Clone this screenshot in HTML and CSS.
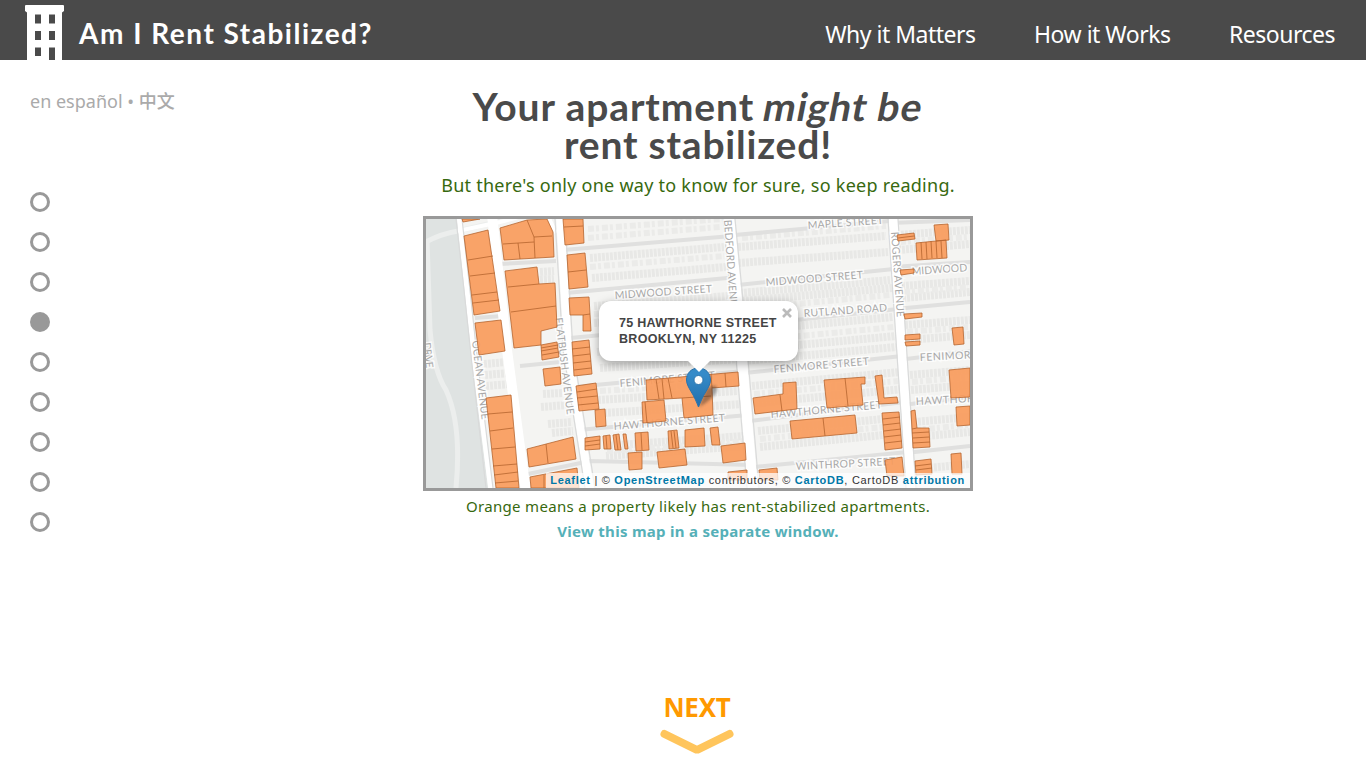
FILE: index.html
```html
<!DOCTYPE html>
<html lang="en">
<head>
<meta charset="utf-8">
<title>Am I Rent Stabilized?</title>
<link rel="stylesheet" href="styles.css">
</head>
<body>
<header class="header">
  <a class="brand">
    <svg class="logo" width="40" height="55" viewBox="0 0 40 55"><path fill="#fff" fill-rule="evenodd" d="M1 0H38Q39 0 39 1V6L37 7.500V55H30V42.500H24V55H2V7.500L0 6V1Q0 0 1 0ZM10 9.500V18.500H16V9.500ZM24 9.500V18.500H30V9.500ZM10 26V35H16V26ZM24 26V35H30V26ZM10 42.500V51H16V42.500Z"/></svg>
    <span class="brand-name">Am I Rent Stabilized?</span>
  </a>
  <nav class="nav"><a>Why it Matters</a><a>How it Works</a><a>Resources</a></nav>
</header>
<div class="page">
  <aside class="side">
    <div class="lang">en español • <span class="zh">中文</span></div>
    <div class="dots"><i></i><i></i><i></i><i class="on"></i><i></i><i></i><i></i><i></i><i></i></div>
  </aside>
  <main class="main">
    <h1 class="title"><span class="t1">Your apartment <em>might be</em></span><span class="t2">rent stabilized!</span></h1>
    <p class="sub">But there's only one way to know for sure, so keep reading.</p>
    <div class="map">
      <svg class="tiles" width="544" height="269" viewBox="426 219 544 269">
        <rect x="426" y="219" width="544" height="269" fill="#f4f4f2"/>
        <path d="M426 219H458L466 290L474 370L488 488H426Z" fill="#dfe3e2"/>
        <g class="parkroad"><path d="M424 243Q440 234 458 231L500 221"/><path d="M427 240L430 330Q434 372 446 390Q462 425 456 488"/></g>
        <g class="lots">
          <path d="M590 258L724 247M592 278L726 267M594 306L728 296M594 323L730 313M597 352L735 343M600 368L738 359M598 400L738 391M604 413L742 404M606 446L744 436M606 456L744 446"/>
          <path d="M738 247L886 236M738 263L888 252M740 293L890 280M742 301L892 288M742 331L893 317M744 350L896 336M744 361L896 347M752 386L900 372M755 403L904 389M758 431L904 417M760 447L904 433"/>
          <path d="M897 235L970 230M898 250L970 244M902 286L970 281M903 298L970 292M905 325L970 320M907 340L970 335M910 375L970 370M911 390L970 385M914 422L970 417M916 437L970 432M918 469L970 464"/>
          <path d="M540 272L554 271M540 280L554 279M484 364L507 362M485 375L509 373M486 386L510 384M543 394L562 393M541 407L567 405M548 424L572 422M552 433L573 431"/>
        </g>
        <g class="houses">
          <path d="M588 229L722 219M588 238L720 227M590 267L724 256M594 314L728 305M600 391L738 382M607 451L744 441M742 238L886 226M744 309L890 295M748 341L894 327M754 394L898 381M760 439L904 425M900 242L968 237M904 292L968 287M907 332L968 327M912 382L968 377M915 430L968 425"/>
        </g>
        <g class="street-case">
          <path d="M563 250L732 236M566 293L738 277M570 338L740 322M520 366L560 362M574 387L744 371M578 430L748 415M500 264L556 261M475 318L502 316M528 474L590 461L754 465"/>
          <path d="M735 235L890 221M738 285L894 269M740 326L898 309M745 373L902 356M750 421L904 402M754 467L908 452M892 267L970 262M895 309L970 302M898 360L970 351M902 405L970 397M906 453L970 446M890 223L970 220"/>
        </g>
        <g class="ave">
          <path d="M492 215L507 350L526 492" stroke-width="10"/>
          <path d="M458 231L500 222L545 210L556 233" stroke-width="4"/>
          <path d="M459 215L467 290L475 365L491 490" stroke-width="5"/>
          <path d="M560 215L568 350L590 490" stroke-width="8"/>
          <path d="M729 215L737 300L753 490" stroke-width="10"/>
          <path d="M893 215L901 340L911 490" stroke-width="9"/>
        </g>
        <path class="line" d="M456 219L464 290L472 365L486 488M462 219L470 290L478 365L493 488M565 219L573 350L595 488M555 219L563 350L585 488M735 219L743 300L759 488M723 219L731 300L747 488M898 219L906 340L916 488M888 219L896 340L906 488"/>
        <g class="labels">
          <text transform="translate(615 299) rotate(-4)" textLength="98">MIDWOOD STREET</text>
          <text transform="translate(766 286) rotate(-4.500)" textLength="98">MIDWOOD STREET</text>
          <text transform="translate(808 229) rotate(-4)" textLength="76">MAPLE STREET</text>
          <text transform="translate(804 317) rotate(-4)" textLength="84">RUTLAND ROAD</text>
          <text transform="translate(912 275) rotate(-4)" textLength="56">MIDWOOD</text>
          <text transform="translate(620 387) rotate(-5)" textLength="96">FENIMORE STREET</text>
          <text transform="translate(774 373) rotate(-5)" textLength="96">FENIMORE STREET</text>
          <text transform="translate(920 361) rotate(-3)">FENIMORE</text>
          <text transform="translate(614 430) rotate(-4.500)" textLength="112">HAWTHORNE STREET</text>
          <text transform="translate(771 418) rotate(-5)" textLength="112">HAWTHORNE STREET</text>
          <text transform="translate(916 405) rotate(-3)">HAWTHORNE</text>
          <text transform="translate(796 470) rotate(-3)" textLength="100">WINTHROP STREET</text>
          <text transform="translate(724 220) rotate(86)" textLength="94">BEDFORD AVENUE</text>
          <text transform="translate(891 232) rotate(86)" textLength="86">ROGERS AVENUE</text>
          <text transform="translate(555 318) rotate(83)" textLength="98">FLATBUSH AVENUE</text>
          <text transform="translate(472 341) rotate(83)" textLength="80">OCEAN AVENUE</text>
          <text transform="translate(423 343) rotate(83)" textLength="26">DRIVE</text>
        </g>
        <g class="lot">
          <path d="M462 219H480L463 222Z"/>
          <path d="M464 236L488 230L500 311L474 315ZM468 260L493 256M470 276L495 273M472 295L497 292M473 303L499 300M475 323L501 320L505 351L479 355Z"/>
          <path d="M500 228L527 220L547 219L553 232L554 257L504 260ZM527 220L534 237L535 258M534 237L552 236M503 244L534 242M518 243L520 259"/>
          <path d="M505 271L537 267L539 284L555 283L557 327L541 331L541 345L514 348ZM508 287L539 284M511 312L556 306"/>
          <path d="M563 219H583L584 243L565 245ZM564 227L583 226M567 255L585 253L588 287L569 289ZM568 272L586 270M569 298L589 297L591 331H583V315H570ZM583 315L590 314"/>
          <path d="M541 345L557 342L559 357L542 360ZM541 348L558 345M541 351L558 348M542 355L559 352M572 342L589 340L592 374L574 376ZM572 349L590 347M573 356L590 354M573 363L591 361M574 370L591 368"/>
          <path d="M543 369L560 367L561 384L545 386ZM576 386L596 383L599 409L579 411ZM577 392L597 389M577 398L597 396M578 405L598 403M595 410L605 409L606 426L596 427Z"/>
          <path d="M585 438L600 436V449L585 450ZM585 442L600 440M585 446L600 444M603 436L610 435L611 449H604ZM606 436L607 449M613 435L619 434L621 450H615ZM616 435L618 450M623 434H626L628 449H625Z"/>
          <path d="M486 398L511 395L519 488H496ZM488 414L512 412M490 431L513 428M492 449L515 447M493 466L517 464M494 475L518 472M495 483L518 481M527 449L573 437L576 459L529 467ZM546 444L548 463M530 477L577 468L579 488H531ZM544 475V488"/>
          <path d="M646 380L738 372L739 386L712 388L713 415L684 418L682 398L647 400ZM656 379L659 399M662 379L664 399M668 378L672 398M682 398L711 396M711 374L712 388M725 373L726 387M642 402L664 400L666 421L643 423ZM645 402L647 423"/>
          <path d="M635 433L648 432L649 450L636 451ZM641 433L642 450M668 431L677 430L679 448L669 449ZM671 431L673 448M674 431L676 448M685 430L704 428L705 446L685 447ZM710 428L718 427L720 445H712Z"/>
          <path d="M657 452L685 449L687 465L659 468ZM628 453L642 452V469L629 470ZM721 446L745 443L746 460L723 463ZM728 472L747 470V480H728ZM759 470L777 468L778 480H760Z"/>
          <path d="M753 398L783 394V383L796 382L797 409L755 414ZM780 395L782 411M824 380L865 377V384H861L863 405L827 408ZM845 378L848 406M875 376L882 375L884 398L897 397L898 403L879 404ZM790 421L855 415L857 433L792 439ZM823 418L825 436"/>
          <path d="M882 413L899 412L902 448L885 450ZM883 419L900 417M883 425L900 423M884 431L901 429M884 437L901 435M885 443L902 441M911 411L915 410L917 428H929L930 447L913 448ZM912 429L917 428M912 433L929 432M913 438L929 437M913 443L930 442"/>
          <path d="M915 461L931 459L932 474L916 475ZM915 466L931 464M916 470L932 468M885 460L902 457L904 476H887ZM951 454L961 453L962 474H952ZM949 370L970 368V397L951 398ZM956 407L970 406V425L957 426Z"/>
          <path d="M897 235L914 233L915 239L898 241ZM898 238L914 236M934 225L948 224L949 240L936 241ZM916 243L946 240L947 258L917 260ZM921 242L922 259M926 242L927 259M931 241L932 258M936 241L937 258M941 241L942 258M900 270L914 269V273L901 275ZM904 314L922 313V317L905 319ZM905 335L920 334V339L905 340ZM905 342L920 341V345L906 346ZM952 328L963 327L964 344L954 345Z"/>
        </g>
        <rect x="546" y="473" width="424" height="15" fill="#fff" opacity=".72"/>
      </svg>
      <div class="attribution"><b>Leaflet</b> | © <b>OpenStreetMap</b> contributors, © <b>CartoDB</b>, CartoDB <b>attribution</b></div>
      <svg class="pin" width="42" height="42" viewBox="0 0 42 42">
        <defs><linearGradient id="blue" x2="0" y2="1"><stop stop-color="#3a91cf"/><stop offset="1" stop-color="#216eaa"/></linearGradient><filter id="blur"><feGaussianBlur stdDeviation="1.5"/></filter></defs>
        <path d="M14 40L21 22Q32 15 32 23Q30 31 14 40Z" fill="#222" opacity=".4" filter="url(#blur)"/>
        <path d="M13.500 1C6 1 1.500 6.500 1.500 13C1.500 17 4 21 6 24.500C9 29 11.500 35 13.500 40C15.500 35 18 29 21 24.500C23 21 25.500 17 25.500 13C25.500 6.500 21 1 13.500 1Z" fill="url(#blue)" stroke="#2a73ad"/>
        <circle cx="13.500" cy="13" r="4.500" fill="#fff" stroke="#2d75ac"/>
      </svg>
      <div class="popup">75 HAWTHORNE STREET<br>BROOKLYN, NY 11225<svg class="close" width="10" height="10" viewBox="0 0 10 10"><path d="M1 1L9 9M9 1L1 9" stroke="#bbb" stroke-width="2.600"/></svg></div>
    </div>
    <p class="note">Orange means a property likely has rent-stabilized apartments.</p>
    <a class="view">View this map in a separate window.</a>
    <a class="next"><span>NEXT</span><svg width="74" height="26" viewBox="0 0 74 26"><path d="M4.500 5L37 21L69.500 5" fill="none" stroke="#ffc55c" stroke-width="8" stroke-linecap="round" stroke-linejoin="bevel"/></svg></a>
  </main>
</div>
</body>
</html>
```
FILE: styles.css
```css
* { box-sizing: border-box; }
body { margin: 0; height: 768px; background: #fff; overflow: hidden; font-family: "Noto Sans", "Noto Sans CJK SC", sans-serif; }
.header { height: 60px; background: #4a4a4a; color: #fff; display: flex; justify-content: space-between; padding: 5px 31px 0 25px; }
.brand { display: flex; }
.logo { display: block; }
.brand-name { font: 700 28px/57px Lato, sans-serif; letter-spacing: 1.5px; margin-left: 14px; white-space: nowrap; }
.nav { display: flex; gap: 58.5px; font-size: 23px; line-height: 59px; white-space: nowrap; }
.nav a { letter-spacing: -.5px; }
.page { display: grid; grid-template-columns: 423px 550px; height: 708px; }
.side { padding: 26px 0 0 30px; }
.lang { font-size: 18px; line-height: 28px; color: #aaa; letter-spacing: 0; }
.zh { font-family: "Noto Sans CJK SC", sans-serif; font-weight: 500; }
.dots { display: flex; flex-direction: column; gap: 20px; margin-top: 77px; }
.dots i { width: 20px; height: 20px; border: 3.5px solid #999; border-radius: 50%; }
.dots .on { background: #999; }
.main { display: flex; flex-direction: column; align-items: center; text-align: center; padding-top: 27px; }
.title { margin: 0; font: 700 39px/38px Lato, sans-serif; color: #4a4a4a; white-space: nowrap; }
.title span { display: block; }
.title em { display: inline-block; font-style: normal; transform: skewX(-11deg); letter-spacing: .9px; }
.t1 { letter-spacing: .9px; }
.t2 { letter-spacing: .8px; }
.sub { margin: 7px 0 0; font-size: 18px; line-height: 30px; letter-spacing: .25px; color: #37690f; white-space: nowrap; }
.map { position: relative; width: 550px; height: 275px; border: 3px solid #999; margin-top: 16px; }
.tiles { display: block; }
.parkroad path { fill: none; stroke: #eceeed; stroke-width: 5; }
.lots path { fill: none; stroke: #e8e8e6; stroke-width: 8; stroke-dasharray: 3 1; }
.houses path { fill: none; stroke: #ebebe9; stroke-width: 6; stroke-dasharray: 6 2 3 3; }
.street-case path { fill: none; stroke: #e0e0df; stroke-width: 4; }
.ave path { fill: none; stroke: #fff; }
.line { fill: none; stroke: #d9dada; stroke-width: 1.2; }
.lot path { fill: #f99b5c; fill-opacity: .92; stroke: #b5642f; stroke-width: .8; }
.labels text { font: 10.5px Lato, sans-serif; fill: #a8a8a8; letter-spacing: .5px; paint-order: stroke; stroke: rgba(255, 255, 255, .75); stroke-width: 3px; }
.attribution { position: absolute; right: 5px; bottom: 0; font: 11px/15px "Liberation Sans", Arial, sans-serif; letter-spacing: .71px; color: #333; white-space: nowrap; }
.attribution b { color: #0078a8; }
.pin { position: absolute; left: 259px; top: 148px; }
.popup { position: absolute; left: 173px; top: 82px; width: 199px; height: 60px; border-radius: 12px; background: #fff; box-shadow: 0 3px 10px rgba(0, 0, 0, .35); padding: 14px 0 0 20px; text-align: left; font: 700 12.5px/16px "Liberation Sans", Arial, sans-serif; letter-spacing: .3px; color: #444; white-space: nowrap; }
.popup::after { content: ""; position: absolute; left: 88px; top: 59px; border: 12px solid transparent; border-top-color: #fff; border-bottom: 0; }
.close { position: absolute; right: 6px; top: 7px; }
.note { margin: 3px 0 0; font-size: 15px; line-height: 24px; letter-spacing: .32px; color: #37690f; white-space: nowrap; }
.view { font-size: 15px; font-weight: 700; line-height: 26px; letter-spacing: .28px; color: #55b0b8; white-space: nowrap; }
.next { display: flex; flex-direction: column; align-items: center; margin-top: auto; padding-bottom: 13px; margin-right: 2px; }
.next span { font: 700 26px/34px "Noto Sans", sans-serif; color: #f90; letter-spacing: -.3px; margin-bottom: 5px; }
.next svg { display: block; }
```
